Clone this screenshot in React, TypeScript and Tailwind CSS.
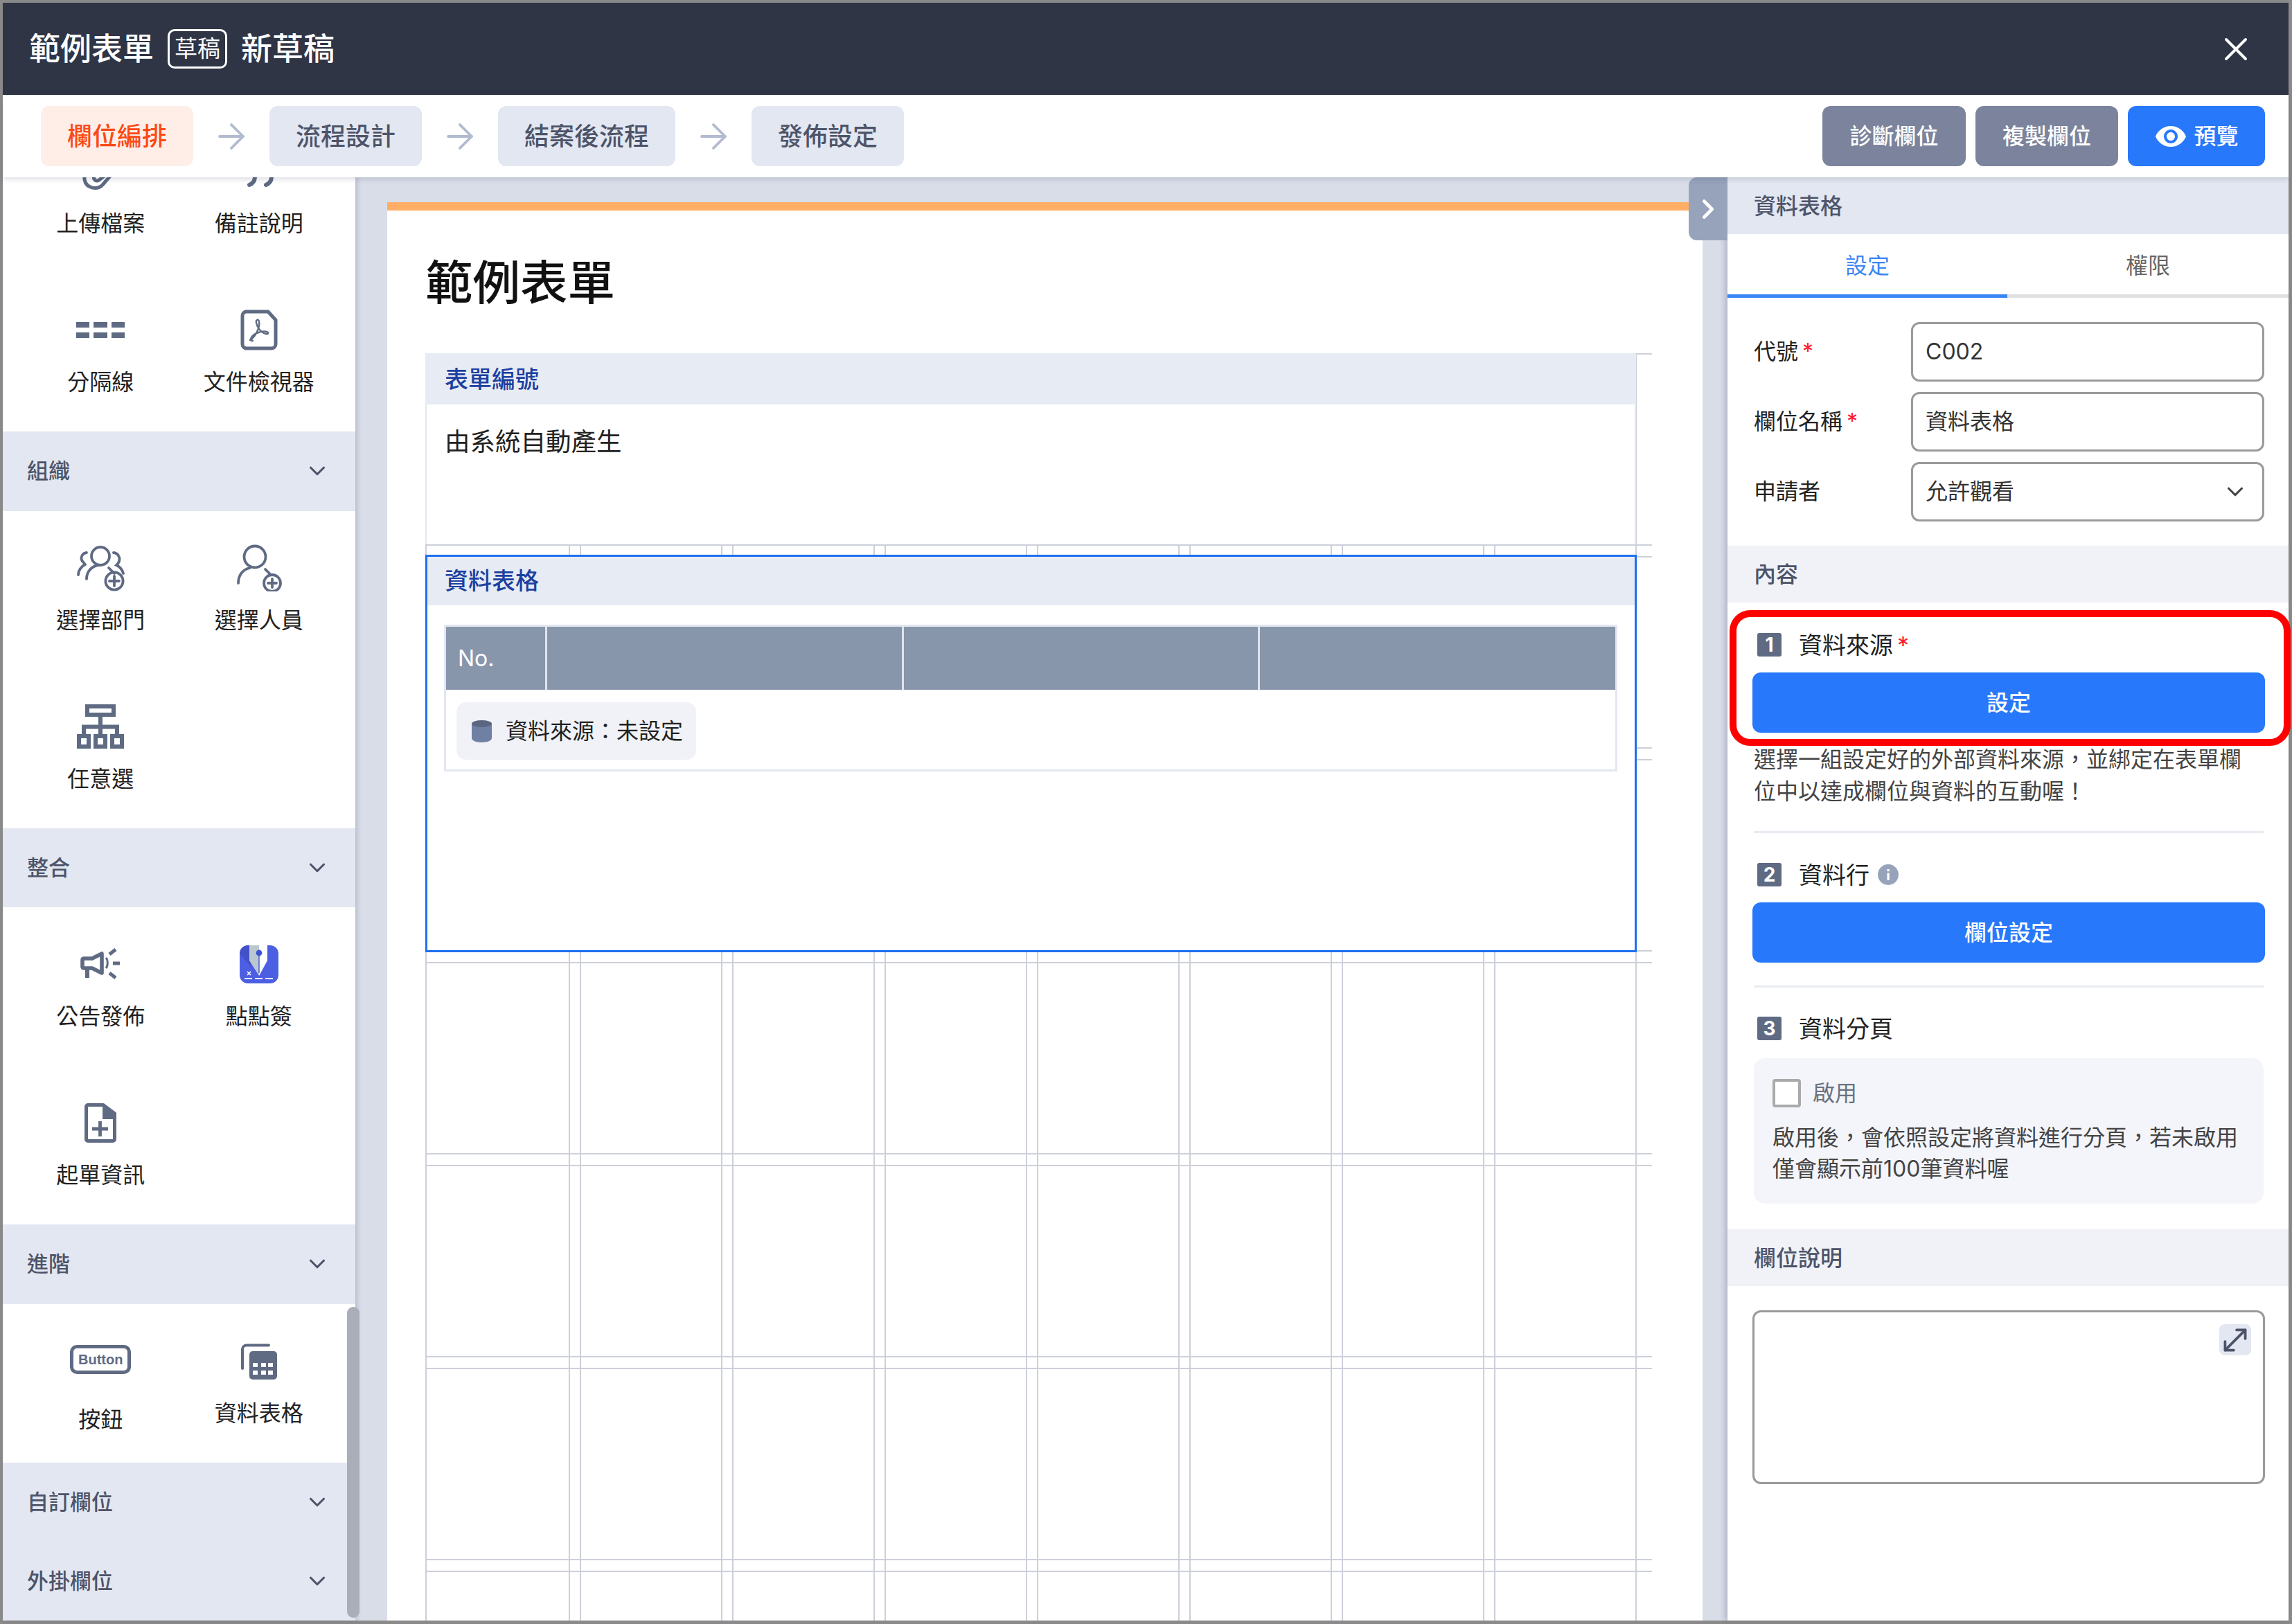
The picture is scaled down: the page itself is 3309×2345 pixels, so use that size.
import type { ReactNode } from "react";
import { ArrowRight, ChevronDown, ChevronRight, MoveDiagonal, X } from "lucide-react";
import { MdVisibility } from "react-icons/md";

const ICON = "#5f6a83";

function ClipIcon() {
  return (
    <svg width="58" height="58" viewBox="0 0 58 58" fill="none" stroke={ICON} strokeWidth="5" strokeLinecap="round">
      <path d="M52 26 32 49c-8 8-24 5-26-8-1-6 2-10 6-14" />
      <path d="M40 32 27 42c-5 3-10-2-6-7l8-9" />
    </svg>
  );
}

function QuoteIcon() {
  return (
    <svg width="46" height="52" viewBox="0 0 46 52" fill="none" stroke={ICON} strokeWidth="6" strokeLinecap="round">
      <path d="M17 24v10c0 6-3 10-8 12" />
      <path d="M41 24v10c0 6-3 10-8 12" />
    </svg>
  );
}

function DividerIcon() {
  return (
    <svg width="70" height="23" viewBox="0 0 70 23" fill={ICON}>
      <rect x="0" y="0" width="19" height="8" />
      <rect x="25" y="0" width="20" height="8" />
      <rect x="51" y="0" width="19" height="8" />
      <rect x="0" y="15" width="19" height="8" />
      <rect x="25" y="15" width="20" height="8" />
      <rect x="51" y="15" width="19" height="8" />
    </svg>
  );
}

function PdfIcon() {
  return (
    <svg width="54" height="59" viewBox="0 0 54 59" fill="none" stroke={ICON}>
      <path d="M8 3h32l11 12v35a6 6 0 0 1-6 6H8a6 6 0 0 1-5-6V9a6 6 0 0 1 5-6Z" strokeWidth="5" strokeLinejoin="round" />
      <path
        d="M14 44c6-3 15-17 13-27-1-4-5-2-4 2 1 6 6 14 14 16 4 1 4-2 1-3-6-2-18 2-22 8-2 3 0 6 2 5Z"
        strokeWidth="2.4"
        strokeLinejoin="round"
      />
    </svg>
  );
}

function DeptIcon() {
  return (
    <svg width="70" height="68" viewBox="0 0 70 68" fill="none" stroke={ICON} strokeWidth="3.8" strokeLinecap="round">
      <circle cx="35" cy="17" r="13" />
      <path d="M15 50c0-11 8-20 20-20" />
      <path d="M15 12C8 13 5 21 10 25.500c2 2 3 3 3 3.500C7 32 3 38 3 44" />
      <path d="M54 12c8 1 11 10 6 16l-2 2c6 3 9 8 10 12" />
      <path d="M47 34l8 8" />
      <circle cx="55" cy="53" r="12.600" />
      <path d="M48 53h14M55 46v14" />
    </svg>
  );
}

function PersonIcon() {
  return (
    <svg width="66" height="68" viewBox="0 0 66 68" fill="none" stroke={ICON} strokeWidth="3.8" strokeLinecap="round">
      <circle cx="27" cy="18" r="15.500" />
      <path d="M3 56c0-12 7-20 17-22" />
      <path d="M42 36l7 7" />
      <circle cx="52" cy="56" r="12" />
      <path d="M46 56h12M52 50v12" />
    </svg>
  );
}

function OrgIcon() {
  return (
    <svg width="68" height="64" viewBox="0 0 68 64" fill="none" stroke={ICON} strokeWidth="6">
      <rect x="15" y="3" width="38" height="12" />
      <path d="M34 18v25M10 43V32.500h48V43" />
      <rect x="3" y="46" width="14" height="15" />
      <rect x="27" y="46" width="14" height="15" />
      <rect x="51" y="46" width="14" height="15" />
    </svg>
  );
}

function MegaphoneIcon() {
  return (
    <svg width="58" height="46" viewBox="0 0 58 46" fill="none" stroke={ICON}>
      <path d="M5 15h12L31 8v28L17 29H5a2 2 0 0 1-2-2V17a2 2 0 0 1 2-2Z" strokeWidth="5.600" strokeLinejoin="round" />
      <path d="M10 29v14" strokeWidth="6" />
      <path d="M37 14c3 3 3 12 0 15" strokeWidth="3" />
      <path d="M42 9l9-7M47 22h10M42 36l9 7" strokeWidth="5" />
    </svg>
  );
}

function SignLogo() {
  return (
    <svg width="56" height="55" viewBox="0 0 56 55">
      <rect width="56" height="55" rx="12" fill="#4c5fe2" />
      <path d="M0 12A12 12 0 0 1 12 0h4v30L28 44Z" fill="#3f4cbc" opacity="0.7" />
      <path d="M14 0h14v44L14 22Z" fill="#bcc8d0" />
      <path d="M28 0h12v22L28 44Z" fill="#fff" />
      <circle cx="28" cy="11" r="4.400" fill="#3f52d6" />
      <path d="M28 12v28" stroke="#3f52d6" strokeWidth="1.400" />
      <path d="M11 38l5 5M16 38l-5 5" stroke="#fff" strokeWidth="1.600" />
      <path d="M7 48h11M22 48h11M37 48h11" stroke="#fff" strokeWidth="2" />
    </svg>
  );
}

function FilePlusIcon() {
  return (
    <svg width="46" height="57" viewBox="0 0 46 57" fill="none" stroke={ICON}>
      <path d="M5 2.500h22L43.500 15v37a2.500 2.500 0 0 1-2.500 2.500H5A2.500 2.500 0 0 1 2.500 52V5A2.500 2.500 0 0 1 5 2.500Z" strokeWidth="5" strokeLinejoin="round" />
      <path d="M26 0l20 14v9H26Z" fill={ICON} stroke="none" />
      <path d="M11 37h23M22.500 26v22" strokeWidth="4.800" />
    </svg>
  );
}

function TableCalcIcon() {
  return (
    <svg width="52" height="52" viewBox="0 0 52 52">
      <path d="M40 2.500H8A6 6 0 0 0 2 8.500V36" fill="none" stroke={ICON} strokeWidth="4" strokeLinecap="round" />
      <rect x="12" y="11" width="40" height="41" rx="5" fill={ICON} />
      {[28, 39].map((y) =>
        [17, 29, 39].map((x) => <rect key={`${x}-${y}`} x={x} y={y} width="7" height="6" fill="#fff" />),
      )}
    </svg>
  );
}

function ButtonIcon() {
  return (
    <div className="flex h-[42px] w-[88px] items-center justify-center rounded-[10px] border-[5px] border-[#5f6a83] text-[20px] leading-none font-bold text-[#5f6a83] [font-family:'Liberation_Sans',sans-serif]">
      Button
    </div>
  );
}

function Tool({ icon, label, className = "pt-[56px]", gap = "mt-[26px]" }: { icon: ReactNode; label: string; className?: string; gap?: string }) {
  return (
    <div className={`flex h-[229px] flex-col items-center ${className}`}>
      <div className="flex h-[52px] items-center justify-center">{icon}</div>
      <div className={`${gap} text-[32px] leading-[48px] text-[#222]`}>{label}</div>
    </div>
  );
}

function SectionHead({ label }: { label: string }) {
  return (
    <div className="flex h-[114.500px] shrink-0 items-center justify-between bg-[#e3e7f1] pr-[36px] pl-[35px] text-[31px] font-medium text-[#4d5469]">
      {label}
      <ChevronDown size={38} strokeWidth={2} color="#4d5469" />
    </div>
  );
}

function Sidebar() {
  return (
    <div className="relative z-[5] w-[509px] shrink-0 shadow-[3px_0_6px_rgba(40,50,80,0.18)]">
      <div className="flex h-full flex-col overflow-hidden bg-white">
        <div className="-mt-[91px] grid shrink-0 grid-cols-2 pr-[25px] pl-[27px]">
          <Tool icon={<ClipIcon />} label="上傳檔案" />
          <Tool icon={<QuoteIcon />} label="備註說明" />
          <Tool icon={<DividerIcon />} label="分隔線" />
          <Tool icon={<PdfIcon />} label="文件檢視器" />
        </div>
        <SectionHead label="組織" />
        <div className="grid shrink-0 grid-cols-2 pr-[25px] pl-[27px]">
          <Tool icon={<DeptIcon />} label="選擇部門" />
          <Tool icon={<PersonIcon />} label="選擇人員" />
          <Tool icon={<OrgIcon />} label="任意選" />
        </div>
        <SectionHead label="整合" />
        <div className="grid shrink-0 grid-cols-2 pr-[25px] pl-[27px]">
          <Tool icon={<MegaphoneIcon />} label="公告發佈" />
          <Tool icon={<SignLogo />} label="點點簽" />
          <Tool icon={<FilePlusIcon />} label="起單資訊" />
        </div>
        <SectionHead label="進階" />
        <div className="grid shrink-0 grid-cols-2 pr-[25px] pl-[27px]">
          <Tool icon={<ButtonIcon />} label="按鈕" className="pt-[54px]" gap="mt-[37px]" />
          <Tool icon={<TableCalcIcon />} label="資料表格" className="pt-[57px]" gap="mt-[25px]" />
        </div>
        <SectionHead label="自訂欄位" />
        <SectionHead label="外掛欄位" />
      </div>
      <div className="absolute top-[1631px] left-[497px] h-[449px] w-[18px] rounded-full bg-[#a9aeb9]" />
    </div>
  );
}

function Canvas() {
  return (
    <div className="flex-1 overflow-hidden bg-[#d9dde8] pt-[36px] pl-[46px]">
      <div className="h-full w-[1899px] border-t-[12px] border-[#ffae66] bg-white pt-[65px] pl-[55px]">
        <div className="mb-[61px] text-[68.500px] leading-[80px] font-medium text-[#111]">範例表單</div>
        <div className="relative h-[1900px] w-[1771px]">
          {/* grid lines behind the fields */}
          <div className="absolute inset-0 bg-[repeating-linear-gradient(180deg,#cdd0da_0,#cdd0da_2px,transparent_2px,transparent_276px,#cdd0da_276px,#cdd0da_278px,transparent_278px,transparent_293px)]" />
          <div className="absolute top-0 bottom-0 left-0 w-[2px] bg-[#cdd0da]" />
          <div className="absolute top-0 bottom-0 left-[5px] w-[1744px] bg-[repeating-linear-gradient(90deg,transparent_0,transparent_202px,#cdd0da_202px,#cdd0da_204px,transparent_204px,transparent_218px,#cdd0da_218px,#cdd0da_220px)]" />

          <div className="relative flex h-[276px] w-[1748px] flex-col border-x-2 border-[#e3e5ef] bg-white">
            <div className="-mx-[2px] flex h-[74px] items-center bg-[#e7ebf4] pl-[28px] text-[34px] font-medium text-[#1c40a0]">表單編號</div>
            <div className="pt-[30px] pl-[26px] text-[36.500px] leading-[48px] text-[#222]">由系統自動產生</div>
          </div>

          <div className="relative mt-[15px] h-[574px] w-[1749px] border-[3px] border-[#1f6ff0] bg-white">
            <div className="flex h-[70px] items-center bg-[#e7ebf4] pb-[2px] pl-[25px] text-[34px] font-medium text-[#1c40a0]">資料表格</div>
            <div className="mx-[24px] mt-[28px] h-[212px] w-[1694px] border-[3px] border-[#e3e7f1]">
              <div className="flex h-[91px] bg-[#8896ac]">
                <div className="flex w-[146px] items-center border-r-[3px] border-[#dfe3ec] pl-[17px] text-[32px] text-white">No.</div>
                <div className="w-[515px] border-r-[3px] border-[#dfe3ec]" />
                <div className="w-[514px] border-r-[3px] border-[#dfe3ec]" />
                <div className="flex-1" />
              </div>
              <div className="pt-[18px] pl-[15px]">
                <div className="flex h-[83px] w-[346px] items-center gap-[20px] rounded-[14px] bg-[#f0f2f7] pl-[22px] text-[32px] text-[#222]">
                  <svg width="29" height="32" viewBox="0 0 29 32">
                    <path d="M0 5v21c0 3 6 6 14.500 6S29 29 29 26V5Z" fill="#7080a3" />
                    <ellipse cx="14.500" cy="5" rx="14.500" ry="5" fill="#5a6680" />
                  </svg>
                  資料來源：未設定
                </div>
              </div>
            </div>
          </div>
        </div>
      </div>
    </div>
  );
}

function PanelHead({ label, tone = "bg-[#f0f2f7]" }: { label: string; tone?: string }) {
  return <div className={`flex h-[82px] items-center pt-[2px] pl-[38px] text-[32px] font-medium text-[#4d5469] ${tone}`}>{label}</div>;
}

function FormRow({ label, required, children }: { label: string; required?: boolean; children: ReactNode }) {
  return (
    <div className="flex h-[86px] items-center">
      <div className="w-[229px] pl-[2px] text-[32px] text-[#222]">
        {label}
        {required && <span className="ml-[6px] text-[#ff1a2e]">*</span>}
      </div>
      <div className="flex h-full w-[510px] items-center justify-between rounded-[12px] border-[3px] border-[#9a9a9a] pr-[20px] pl-[18px] text-[32px] text-[#333]">
        {children}
      </div>
    </div>
  );
}

function StepTitle({ n, children }: { n: number; children: ReactNode }) {
  return (
    <div className="flex h-[34px] items-center pl-[7px] text-[34px] text-[#222]">
      <span className="mr-[25px] flex h-[34px] w-[35px] items-center justify-center rounded-[3px] bg-[#5f6a83] text-[28px] leading-none font-bold text-white">{n}</span>
      {children}
    </div>
  );
}

function BlueButton({ label }: { label: string }) {
  return <div className="mt-[23px] flex h-[87px] w-[740px] items-center justify-center rounded-[12px] bg-[#2878fb] text-[32px] font-medium text-white">{label}</div>;
}

function RightPanel() {
  return (
    <div className="relative z-[5] w-[810px] shrink-0 bg-white shadow-[-4px_0_7px_rgba(60,70,100,0.25)]">
      <div className="absolute top-0 -left-[56px] flex h-[91px] w-[56px] items-center justify-center rounded-l-[12px] bg-[#97a3bb]">
        <ChevronRight size={46} strokeWidth={2.400} color="#fff" />
      </div>
      <PanelHead label="資料表格" tone="bg-[#e3e7f1]" />
      <div className="flex h-[92px] text-[32px]">
        <div className="flex w-[404px] items-center justify-center border-b-[5px] border-[#3a86f5] pt-[5px] text-[#3a86f5]">設定</div>
        <div className="flex flex-1 items-center justify-center border-b-[5px] border-[#e0e0e0] pt-[5px] text-[#666]">權限</div>
      </div>
      <div className="flex flex-col gap-[15px] pt-[35px] pl-[36px]">
        <FormRow label="代號" required>C002</FormRow>
        <FormRow label="欄位名稱" required>資料表格</FormRow>
        <FormRow label="申請者">
          允許觀看
          <ChevronDown size={38} strokeWidth={2} color="#444" />
        </FormRow>
      </div>
      <div className="mt-[35px]">
        <PanelHead label="內容" />
      </div>
      <div className="pt-[44px] pl-[36px]">
        <StepTitle n={1}>
          資料來源<span className="ml-[6px] text-[#ff1a2e]">*</span>
        </StepTitle>
        <BlueButton label="設定" />
        <div className="mt-[16px] w-[730px] pl-[2px] text-[32px] leading-[46px] text-[#444]">
          選擇一組設定好的外部資料來源，並綁定在表單欄位中以達成欄位與資料的互動喔！
        </div>
        <div className="mt-[34px] ml-[2px] h-[3px] w-[736px] bg-[#e8ebf2]" />
        <div className="mt-[43px]">
          <StepTitle n={2}>
            資料行
            <svg className="ml-[12px]" width="30" height="30" viewBox="0 0 30 30">
              <circle cx="15" cy="15" r="15" fill="#97a3bb" />
              <rect x="13.500" y="7" width="3.200" height="3.200" fill="#fff" />
              <rect x="13.500" y="12.500" width="3.200" height="10.500" fill="#fff" />
            </svg>
          </StepTitle>
        </div>
        <BlueButton label="欄位設定" />
        <div className="mt-[33px] ml-[2px] h-[3px] w-[736px] bg-[#e8ebf2]" />
        <div className="mt-[42px]">
          <StepTitle n={3}>資料分頁</StepTitle>
        </div>
        <div className="mt-[26px] ml-[2px] h-[210px] w-[736px] rounded-[16px] bg-[#f4f5fa] pt-[30px] pl-[27px]">
          <div className="flex h-[41px] items-center gap-[17px] text-[32px] text-[#6b7280]">
            <span className="h-[41px] w-[41px] rounded-[4px] border-[4px] border-[#aaa] bg-white" />
            啟用
          </div>
          <div className="mt-[21px] w-[680px] text-[32px] leading-[45px] text-[#444]">
            啟用後，會依照設定將資料進行分頁，若未啟用僅會顯示前100筆資料喔
          </div>
        </div>
      </div>
      <div className="mt-[37px]">
        <PanelHead label="欄位說明" />
      </div>
      <div className="relative mt-[35px] ml-[36px] h-[251px] w-[740px] rounded-[12px] border-[3px] border-[#9a9a9a]">
        <div className="absolute top-[17px] right-[17px] flex h-[45px] w-[46px] items-center justify-center rounded-[8px] bg-[#e3e7f1]">
          <MoveDiagonal size={50} strokeWidth={1.800} color="#4d5469" className="shrink-0" />
        </div>
      </div>
      {/* highlight drawn over the panel */}
      <div className="absolute top-[625px] -right-[3px] left-[3px] h-[196px] rounded-[30px] border-[10px] border-[#ff0000]" />
    </div>
  );
}

const steps = [
  { label: "欄位編排", active: true },
  { label: "流程設計" },
  { label: "結案後流程" },
  { label: "發佈設定" },
];

export default function App() {
  return (
    <div className="flex h-[2345px] w-[3309px] flex-col border-t-4 border-r-[5px] border-b-[5px] border-l-4 border-[#8a8a8a] bg-white [font-family:Inter,'Noto_Sans_CJK_TC','Noto_Sans',sans-serif]">
      <div className="flex h-[133px] shrink-0 items-center bg-[#2f3545] pr-[48px] pl-[38px] text-[45px] font-medium text-white">
        範例表單
        <span className="mx-[20px] flex h-[57px] w-[86px] items-center justify-center rounded-[10px] border-[3px] border-white text-[33px] font-normal">草稿</span>
        新草稿
        <X size={56} strokeWidth={1.700} className="ml-auto" />
      </div>

      <div className="relative z-10 flex h-[119px] shrink-0 items-center bg-white pr-[34px] pl-[55px] shadow-[0_3px_7px_rgba(40,50,80,0.16)]">
        {steps.map((s, i) => (
          <div key={s.label} className="flex items-center">
            {i > 0 && (
              <div className="flex w-[110px] justify-center">
                <ArrowRight size={58} strokeWidth={1.600} color="#b3bbd0" />
              </div>
            )}
            <div
              className={`flex h-[87px] items-center rounded-[12px] px-[38px] text-[36px] font-medium ${
                s.active ? "bg-[#ffeee8] text-[#fb4a14]" : "bg-[#e3e7f1] text-[#4d5469]"
              }`}
            >
              {s.label}
            </div>
          </div>
        ))}
        <div className="ml-auto flex gap-[14px] text-[32px] font-medium text-white">
          <div className="flex h-[87px] w-[207px] items-center justify-center rounded-[12px] bg-[#7b849c]">診斷欄位</div>
          <div className="flex h-[87px] w-[206px] items-center justify-center rounded-[12px] bg-[#7b849c]">複製欄位</div>
          <div className="flex h-[87px] w-[198px] items-center justify-center gap-[9px] rounded-[12px] bg-[#2878fb]">
            <MdVisibility size={48} />
            預覽
          </div>
        </div>
      </div>

      <div className="flex min-h-0 flex-1">
        <Sidebar />
        <Canvas />
        <RightPanel />
      </div>
    </div>
  );
}
